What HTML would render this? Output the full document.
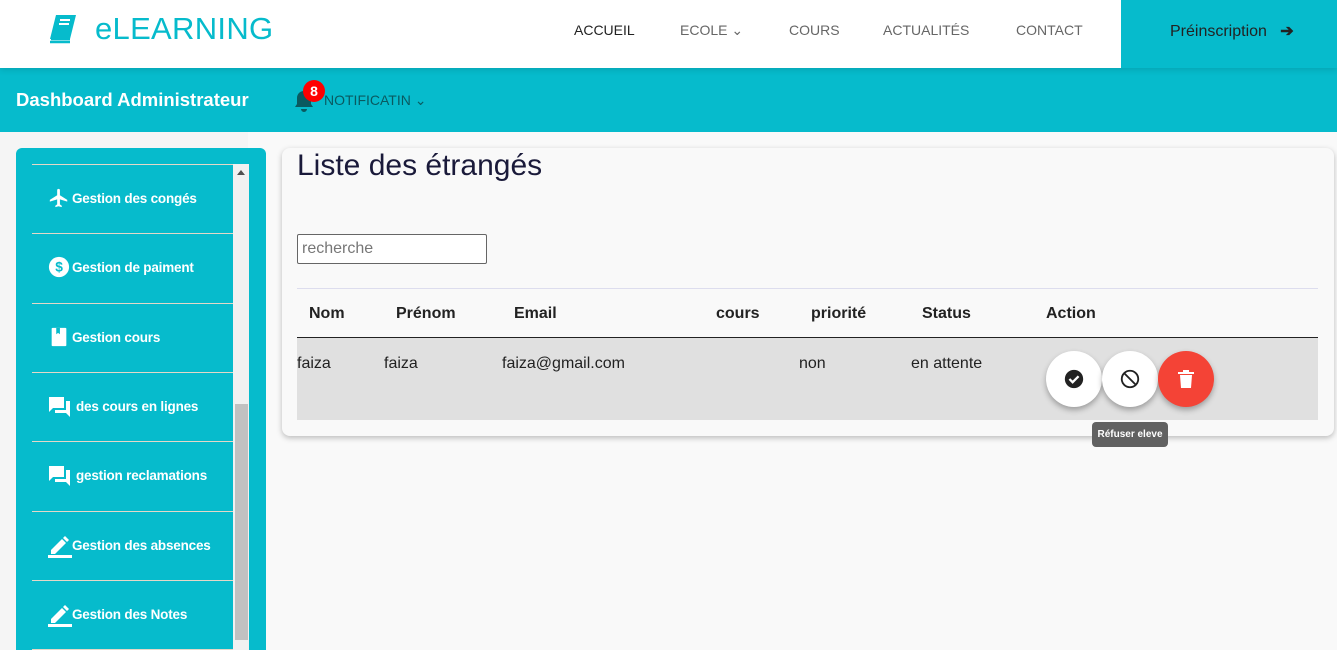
<!DOCTYPE html>
<html><head><meta charset="utf-8"><style>
*{box-sizing:border-box;margin:0;padding:0}
html,body{width:1337px;height:650px;overflow:hidden}
body{background:#f5f5f5;font-family:"Liberation Sans",sans-serif;position:relative}
.nav{position:absolute;left:0;top:0;width:1337px;height:68px;background:#fff;box-shadow:0 2px 6px rgba(0,0,0,.12);z-index:3}
.logo{position:absolute;left:95px;top:11px;font-size:31px;color:#06BBCC;letter-spacing:.3px}
.nl{position:absolute;top:22px;font-size:14px;color:#666}
.pre{position:absolute;left:1121px;top:0;width:216px;height:68px;background:#06BBCC;color:#222;font-size:16px;padding:21px 0 0 49px}
.bar{position:absolute;left:0;top:68px;width:1337px;height:64px;background:#06BBCC;z-index:2}
.side{position:absolute;left:16px;top:148px;width:250px;height:520px;background:#06BBCC;border-radius:6px}
.item{position:absolute;left:32px;width:201px;height:69px;border-top:1.5px solid #e4d8c8;color:#fff;font-weight:bold;font-size:13.5px;letter-spacing:-.2px}
.item span{position:absolute;left:40px;top:26px}
.item svg{position:absolute;left:16px;top:22px}
.card{position:absolute;left:282px;top:148px;width:1052px;height:288px;background:#f9f9f9;border-radius:8px;box-shadow:0 2px 6px rgba(0,0,0,.25)}
.th{position:absolute;top:305px;font-weight:bold;font-size:16px;color:#222}
.td{position:absolute;top:355px;font-size:16px;color:#222}
.btn{position:absolute;top:351px;width:56px;height:56px;border-radius:50%;box-shadow:0 3px 6px rgba(0,0,0,.3);display:flex;align-items:center;justify-content:center}
</style></head><body>
<div class="nav">
<svg style="position:absolute;left:48px;top:14px" width="30" height="30" viewBox="0 0 30 30"><path d="M8 1h20l-6 24H2z" fill="#06BBCC"/><path d="M3 25h19M2 28h20" stroke="#06BBCC" stroke-width="2.5"/><path d="M12 6h10M11 10h10" stroke="#fff" stroke-width="2"/></svg>
<div class="logo">eLEARNING</div>
<div class="nl" style="left:574px;color:#222">ACCUEIL</div>
<div class="nl" style="left:680px">ECOLE ⌄</div>
<div class="nl" style="left:789px">COURS</div>
<div class="nl" style="left:883px">ACTUALITÉS</div>
<div class="nl" style="left:1016px">CONTACT</div>
<div class="pre">Préinscription &nbsp;&nbsp;<b>➔</b></div>
</div>
<div class="bar">
<div style="position:absolute;left:16px;top:21px;color:#fff;font-weight:bold;font-size:18.5px">Dashboard Administrateur</div>
<svg style="position:absolute;left:294px;top:22px" width="20" height="22" viewBox="0 0 20 22"><path d="M10 1c-4 0-7 3-7 7v6l-2 3h18l-2-3V8c0-4-3-7-7-7zM7 19h6a3 3 0 01-6 0z" fill="#0a5a60"/></svg>
<div style="position:absolute;left:303px;top:12px;width:22px;height:22px;border-radius:50%;background:#f00;color:#fff;font-weight:bold;font-size:14px;text-align:center;line-height:22px">8</div>
<div style="position:absolute;left:324px;top:24px;color:#0a5a60;font-size:14px">NOTIFICATIN ⌄</div>
</div>
<div style="position:absolute;left:248px;top:132px;width:1089px;height:518px;background:#f9f9f9"></div>
<div class="side"></div>
<div class="item" style="top:164px"><svg width="22" height="22" viewBox="0 0 24 24"><path d="M21 16v-2l-8-5V3.5a1.5 1.5 0 00-3 0V9l-8 5v2l8-2.5V19l-2 1.5V22l3.5-1 3.5 1v-1.5L13 19v-5.5z" fill="#fff"/></svg><span>Gestion des congés</span></div>
<div class="item" style="top:233px"><svg width="22" height="22" viewBox="0 0 24 24"><circle cx="12" cy="12" r="11" fill="#fff"/><text x="12" y="17" font-size="15" font-weight="bold" text-anchor="middle" fill="#06BBCC" font-family="Liberation Sans">$</text></svg><span>Gestion de paiment</span></div>
<div class="item" style="top:303px"><svg width="22" height="22" viewBox="0 0 24 24"><rect x="4" y="2" width="16" height="20" rx="1" fill="#fff"/><path d="M9 2v7l2-1.5 2 1.5V2" fill="#06BBCC"/></svg><span>Gestion cours</span></div>
<div class="item" style="top:372px"><svg width="24" height="24" viewBox="0 0 24 24"><path d="M1 2h15v11H5l-4 4zM18 6h4v16l-4-4H7v-3h11z" fill="#fff"/></svg><span style="left:44px">des cours en lignes</span></div>
<div class="item" style="top:441px"><svg width="24" height="24" viewBox="0 0 24 24"><path d="M1 2h15v11H5l-4 4zM18 6h4v16l-4-4H7v-3h11z" fill="#fff"/></svg><span style="left:44px">gestion reclamations</span></div>
<div class="item" style="top:511px"><svg width="24" height="24" viewBox="0 0 24 24"><path d="M3 16l11-11 4 4L7 20H3zM15 4l2-2 4 4-2 2z" fill="#fff"/><rect x="0" y="21" width="24" height="3" fill="#fff"/></svg><span>Gestion des absences</span></div>
<div class="item" style="top:580px"><svg width="24" height="24" viewBox="0 0 24 24"><path d="M3 16l11-11 4 4L7 20H3zM15 4l2-2 4 4-2 2z" fill="#fff"/><rect x="0" y="21" width="24" height="3" fill="#fff"/></svg><span>Gestion des Notes</span></div>
<div style="position:absolute;left:32px;top:649px;width:201px;height:1px;background:#e4d8c8"></div>
<div style="position:absolute;left:233px;top:164px;width:16px;height:486px;background:#f1f1f1"></div>
<div style="position:absolute;left:237px;top:170px;border:4px solid transparent;border-bottom:5px solid #505050;border-top:0"></div>
<div style="position:absolute;left:235px;top:404px;width:13px;height:236px;background:#c1c1c1"></div>
<div class="card"></div>
<div style="position:absolute;left:297px;top:149px;font-size:30px;color:#1a1a3a">Liste des étrangés</div>
<div style="position:absolute;left:297px;top:234px;width:190px;height:30px;border:1px solid #666;border-radius:2px;background:#fff;color:#777;font-size:16px;padding:5px 4px">recherche</div>
<div style="position:absolute;left:297px;top:288px;width:1021px;height:1px;background:#dde"></div>
<div class="th" style="left:309px">Nom</div><div class="th" style="left:396px">Prénom</div><div class="th" style="left:514px">Email</div><div class="th" style="left:716px">cours</div><div class="th" style="left:811px">priorité</div><div class="th" style="left:922px">Status</div><div class="th" style="left:1046px">Action</div>
<div style="position:absolute;left:297px;top:337px;width:1021px;height:83px;background:#e0e0e0;border-top:1px solid #222"></div>
<div class="td" style="left:297px">faiza</div><div class="td" style="left:384px">faiza</div><div class="td" style="left:502px">faiza@gmail.com</div><div class="td" style="left:799px">non</div><div class="td" style="left:911px">en attente</div>
<div class="btn" style="left:1046px;background:#fff"><svg width="22" height="22" viewBox="0 0 24 24"><circle cx="12" cy="12" r="10" fill="#222"/><path d="M7 12l3.5 3.5L17 9" stroke="#fff" stroke-width="2.5" fill="none"/></svg></div>
<div class="btn" style="left:1102px;background:#fff"><svg width="22" height="22" viewBox="0 0 24 24"><circle cx="12" cy="12" r="9" stroke="#222" stroke-width="2" fill="none"/><path d="M6 6l12 12" stroke="#222" stroke-width="2"/></svg></div>
<div class="btn" style="left:1158px;background:#f44336"><svg width="18" height="20" viewBox="0 0 18 20"><path d="M1 3h16v2H1zM6 1h6v2H6zM3 6h12l-1 13H4z" fill="#fff"/></svg></div>
<div style="position:absolute;left:1092px;top:422px;width:76px;height:25px;background:#616161;border-radius:4px;color:#fff;font-size:10px;font-weight:bold;text-align:center;line-height:25px">Réfuser eleve</div>
</body></html>
